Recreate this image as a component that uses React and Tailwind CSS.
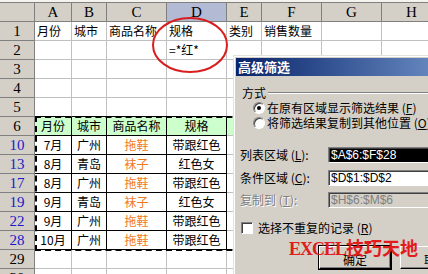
import React from "react";

const CJK = "font-['Noto_Sans_CJK_SC','Noto_Sans',sans-serif]";

// column widths of the sheet (row header first)
const COLS = [
  { key: "A", w: "w-[37px]" },
  { key: "B", w: "w-[35px]" },
  { key: "C", w: "w-[60px]" },
  { key: "D", w: "w-[60px]" },
  { key: "E", w: "w-[35px]" },
  { key: "F", w: "w-[60px]" },
  { key: "G", w: "w-[60px]" },
  { key: "H", w: "w-[60px]" },
];

const ROWS = [
  { n: "1", cells: ["月份", "城市", "商品名称", "规格", "类别", "销售数量"] },
  { n: "2", cells: ["", "", "", "=*红*"] },
  { n: "3", cells: [] },
  { n: "4", cells: [] },
  { n: "5", cells: [], tableTop: true },
  { n: "6", cells: ["月份", "城市", "商品名称", "规格"], head: true },
  { n: "10", cells: ["7月", "广州", "拖鞋", "带跟红色"], data: true },
  { n: "13", cells: ["8月", "青岛", "袜子", "红色女"], data: true },
  { n: "17", cells: ["8月", "广州", "拖鞋", "带跟红色"], data: true },
  { n: "19", cells: ["9月", "青岛", "袜子", "红色女"], data: true },
  { n: "22", cells: ["9月", "广州", "拖鞋", "带跟红色"], data: true },
  { n: "28", cells: ["10月", "广州", "拖鞋", "带跟红色"], data: true },
  { n: "29", cells: [] },
  { n: "30", cells: [] },
];

function SheetRow({ row }) {
  const inTable = row.head || row.data;
  return (
    <div className="flex h-[19px]">
      <div
        className={`flex w-[35px] shrink-0 items-center justify-center border-r border-b border-[#808080] bg-[#d4d0c8] font-['Liberation_Serif',serif] text-[15px] leading-none ${
          row.data ? "text-[#1a1acc]" : "text-black"
        }`}
      >
        {row.n}
      </div>
      {COLS.map((c, i) => {
        const text = row.cells[i] || "";
        const tableCol = i < 4;
        let cls = "border-[#c0c0c0]";
        if (inTable && tableCol) cls = "border-black";
        const bottomBlack = row.tableTop && tableCol;
        const green = row.head && i < 6;
        return (
          <div
            key={c.key}
            className={`${c.w} flex shrink-0 items-center overflow-hidden whitespace-nowrap border-r border-b ${cls} ${
              bottomBlack ? "border-b-black" : ""
            } ${green ? "bg-[#ccffcc]" : "bg-white"} ${
              inTable ? "justify-center" : "pl-[2px]"
            } ${i === 2 && row.data ? "text-[#f07818]" : "text-black"}`}
          >
            {text}
          </div>
        );
      })}
    </div>
  );
}

function Radio({ checked }) {
  return (
    <span className="relative inline-flex h-[12px] w-[12px] shrink-0 items-center justify-center rounded-full border border-t-[#808080] border-l-[#808080] border-r-white border-b-white bg-white shadow-[inset_1px_1px_0_#404040]">
      {checked && <span className="h-[4px] w-[4px] rounded-full bg-black" />}
    </span>
  );
}

function Field({ label, value, mode, disabled }) {
  return (
    <div className="flex h-[16px] items-center">
      <div
        className={`w-[95px] shrink-0 pl-[7px] ${
          disabled ? "text-[#808080] [text-shadow:1px_1px_0_#ffffff]" : "text-black"
        }`}
      >
        {label}
      </div>
      <div
        className={`flex h-full flex-1 items-center border border-t-[#808080] border-l-[#808080] border-r-white border-b-white pl-[2px] font-['Liberation_Sans',sans-serif] text-[12px] shadow-[inset_1px_1px_0_#404040] ${
          mode === "sel"
            ? "bg-black text-white"
            : disabled
            ? "bg-[#d4d0c8] text-[#808080]"
            : "bg-white text-black"
        }`}
      >
        {value}
      </div>
    </div>
  );
}

function Dialog() {
  return (
    <div
      className={`absolute left-[233px] top-[55px] z-20 h-[230px] w-[240px] bg-[#d4d0c8] pl-[3px] pt-[3px] text-[12px] leading-[14px] shadow-[inset_1px_1px_0_#e4e2dc,inset_2px_2px_0_#ffffff] ${CJK}`}
    >
      <div className="flex h-[18px] items-center bg-gradient-to-r from-[#0a246a] to-[#7b9bd0] pl-[2px] text-[13px] font-bold text-white">
        高级筛选
      </div>
      <div className="mt-[10px] flex items-center pl-[6px]">
        <span>方式</span>
        <span className="ml-[2px] h-[2px] flex-1 border-t border-b border-t-[#808080] border-b-white" />
      </div>
      <div className="flex h-[15px] items-center gap-[2px] pl-[17px]">
        <Radio checked />
        <span>
          在原有区域显示筛选结果 (<u>F</u>)
        </span>
      </div>
      <div className="flex h-[15px] items-center gap-[2px] pl-[17px]">
        <Radio />
        <span className="whitespace-nowrap">
          将筛选结果复制到其他位置 (<u>O</u>)
        </span>
      </div>
      <div className="mt-[17px] -ml-[3px]">
        <Field label={<>列表区域 (<u>L</u>):</>} value="$A$6:$F$28" mode="sel" />
      </div>
      <div className="mt-[7px] -ml-[3px]">
        <Field label={<>条件区域 (<u>C</u>):</>} value="$D$1:$D$2" />
      </div>
      <div className="mt-[6px] -ml-[3px]">
        <Field label={<>复制到 (<u>T</u>):</>} value="$H$6:$M$6" disabled />
      </div>
      <div className="mt-[13px] flex h-[13px] items-center gap-[5px] pl-[5px]">
        <span className="h-[12px] w-[12px] shrink-0 border border-t-[#808080] border-l-[#808080] border-r-white border-b-white bg-white shadow-[inset_1px_1px_0_#404040]" />
        <span>
          选择不重复的记录 (<u>R</u>)
        </span>
      </div>
      <div className="mt-[12px] flex gap-[9px] pl-[83px]">
        <div className="flex h-[23px] w-[72px] items-center justify-center border border-t-white border-l-white border-r-black border-b-black pt-[4px] shadow-[inset_-1px_-1px_0_#808080] outline outline-1 outline-black">
          确定
        </div>
        <div className="flex h-[23px] w-[72px] items-center justify-center border border-t-white border-l-white border-r-black border-b-black pt-[4px] shadow-[inset_-1px_-1px_0_#808080]">
          取消
        </div>
      </div>
    </div>
  );
}

export default function App() {
  return (
    <div className={`relative h-[274px] w-[428px] overflow-hidden bg-white text-[12px] ${CJK}`}>
      <div className="h-[3px] border-b border-[#808080] bg-[#f4f3ee]" />
      {/* column headers */}
      <div className="flex h-[19px]">
        <div className="w-[35px] shrink-0 border-r border-b border-[#808080] bg-[#d4d0c8]" />
        {COLS.map((c) => (
          <div
            key={c.key}
            className={`${c.w} flex shrink-0 items-center justify-center border-r border-b border-[#808080] font-['Liberation_Serif',serif] text-[15px] leading-none ${
              c.key === "D" ? "bg-[#b2bad4]" : "bg-[#d4d0c8]"
            }`}
          >
            {c.key}
          </div>
        ))}
      </div>
      {ROWS.map((r) => (
        <SheetRow key={r.n} row={r} />
      ))}

      {/* marching ants around the list range */}
      <div className="pointer-events-none absolute left-[35px] top-[116px] z-10 h-[135px] w-[288px] border-2 border-dashed border-black" />

      {/* red circle around the criteria */}
      <svg className="absolute left-0 top-0 z-10" width="428" height="274">
        <ellipse cx="190" cy="45" rx="37" ry="27" fill="none" stroke="#d81e1e" strokeWidth="2" />
      </svg>

      <div className="absolute left-[289px] top-[238px] z-30 flex items-baseline font-bold leading-none text-[#e01c1c]">
        <span className="font-['Liberation_Serif',serif] text-[18px] tracking-[-1px]">EXCEL</span>
        <span className={`${CJK} text-[18px] leading-none`}>技巧天地</span>
      </div>

      <Dialog />
    </div>
  );
}
